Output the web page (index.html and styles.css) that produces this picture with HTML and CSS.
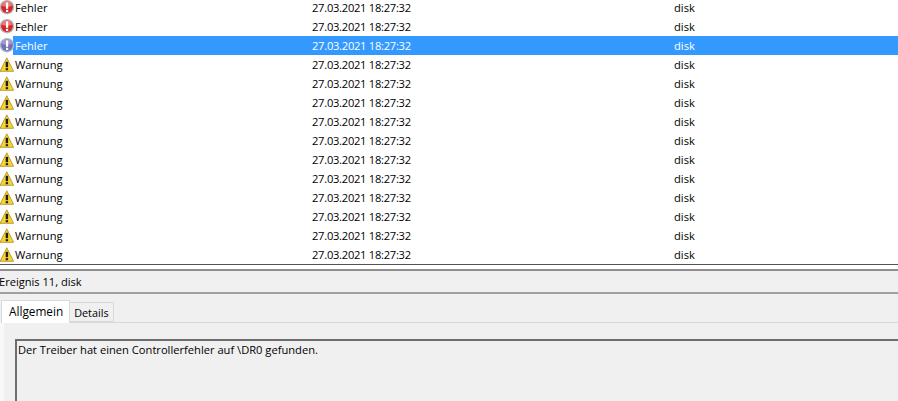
FILE: index.html
```html
<!DOCTYPE html>
<html lang="de">
<head>
  <meta charset="UTF-8" />
  <title>Ereignisanzeige</title>
  <link rel="stylesheet" href="styles.css">
</head>
<body>
  <svg class="sprites" width="0" height="0">
    <symbol id="err" viewBox="0 0 15 16">
      <circle cx="7" cy="7.2" r="7.2" fill="#b9b4b4"/>
      <circle cx="7" cy="7.2" r="5.8" fill="#d8252b"/>
      <path d="M2 5.7a5 4.5 0 0 1 10 0a7 3 0 0 1-10 0z" fill="#ec7a7c"/>
      <rect x="6" y="2.4" width="2.2" height="6.4" fill="#fff"/>
      <rect x="6" y="9.8" width="2.2" height="2.2" fill="#fff"/>
    </symbol>
    <symbol id="errsel" viewBox="0 0 15 16">
      <circle cx="7" cy="7.2" r="7.2" fill="#a6b6d6"/>
      <circle cx="7" cy="7.2" r="5.8" fill="#7a6eb3"/>
      <path d="M2 5.7a5 4.5 0 0 1 10 0a7 3 0 0 1-10 0z" fill="#a39bd0"/>
      <rect x="6" y="2.4" width="2.2" height="6.4" fill="#fff"/>
      <rect x="6" y="9.8" width="2.2" height="2.2" fill="#fff"/>
    </symbol>
    <symbol id="warn" viewBox="0 0 15 16">
      <path d="M6.8 .8 13.6 14.3H0z" fill="#f8d52e" stroke="#a98a20" stroke-width=".8" stroke-linejoin="round"/>
      <rect x="5.7" y="4.8" width="2.4" height="5.4" fill="#1c1c1c"/>
      <rect x="5.7" y="11.2" width="2.4" height="2" fill="#1c1c1c"/>
    </symbol>
  </svg>

  <!-- event list -->
  <ul class="events">
    <li class="row"><span class="level"><svg class="icon"><use href="#err"/></svg><span class="label">Fehler</span></span><span class="date">27.03.2021 18:27:32</span><span class="source">disk</span></li>
    <li class="row"><span class="level"><svg class="icon"><use href="#err"/></svg><span class="label">Fehler</span></span><span class="date">27.03.2021 18:27:32</span><span class="source">disk</span></li>
    <li class="row selected"><span class="level"><svg class="icon"><use href="#errsel"/></svg><span class="label">Fehler</span></span><span class="date">27.03.2021 18:27:32</span><span class="source">disk</span></li>
    <li class="row"><span class="level"><svg class="icon"><use href="#warn"/></svg><span class="label">Warnung</span></span><span class="date">27.03.2021 18:27:32</span><span class="source">disk</span></li>
    <li class="row"><span class="level"><svg class="icon"><use href="#warn"/></svg><span class="label">Warnung</span></span><span class="date">27.03.2021 18:27:32</span><span class="source">disk</span></li>
    <li class="row"><span class="level"><svg class="icon"><use href="#warn"/></svg><span class="label">Warnung</span></span><span class="date">27.03.2021 18:27:32</span><span class="source">disk</span></li>
    <li class="row"><span class="level"><svg class="icon"><use href="#warn"/></svg><span class="label">Warnung</span></span><span class="date">27.03.2021 18:27:32</span><span class="source">disk</span></li>
    <li class="row"><span class="level"><svg class="icon"><use href="#warn"/></svg><span class="label">Warnung</span></span><span class="date">27.03.2021 18:27:32</span><span class="source">disk</span></li>
    <li class="row"><span class="level"><svg class="icon"><use href="#warn"/></svg><span class="label">Warnung</span></span><span class="date">27.03.2021 18:27:32</span><span class="source">disk</span></li>
    <li class="row"><span class="level"><svg class="icon"><use href="#warn"/></svg><span class="label">Warnung</span></span><span class="date">27.03.2021 18:27:32</span><span class="source">disk</span></li>
    <li class="row"><span class="level"><svg class="icon"><use href="#warn"/></svg><span class="label">Warnung</span></span><span class="date">27.03.2021 18:27:32</span><span class="source">disk</span></li>
    <li class="row"><span class="level"><svg class="icon"><use href="#warn"/></svg><span class="label">Warnung</span></span><span class="date">27.03.2021 18:27:32</span><span class="source">disk</span></li>
    <li class="row"><span class="level"><svg class="icon"><use href="#warn"/></svg><span class="label">Warnung</span></span><span class="date">27.03.2021 18:27:32</span><span class="source">disk</span></li>
    <li class="row"><span class="level"><svg class="icon"><use href="#warn"/></svg><span class="label">Warnung</span></span><span class="date">27.03.2021 18:27:32</span><span class="source">disk</span></li>
  </ul>

  <!-- details pane -->
  <section class="pane">
    <h2 class="pane-title">Ereignis 11, disk</h2>
    <div class="tabs">
      <a class="tab active">Allgemein</a>
      <a class="tab">Details</a>
    </div>
    <div class="tab-page">
      <div class="message">Der Treiber hat einen Controllerfehler auf \DR0 gefunden.</div>
    </div>
  </section>
</body>
</html>
```

FILE: styles.css
```css
* {
  margin: 0;
  padding: 0;
  box-sizing: border-box;
}

html,
body {
  height: 401px;
  overflow: hidden;
}

body {
  background: #f0f0f0;
  font-family: "Open Sans", "Noto Sans", sans-serif;
  font-size: 11.15px;
  color: #000;
}

.sprites {
  display: block;
}

/* Event list */
.events {
  list-style: none;
  height: 265px;
  background: #fff;
  border-bottom: 1px solid #555;
  overflow: hidden;
}

.row {
  display: flex;
  align-items: center;
  height: 19px;
  position: relative;
  top: -2px;
}

.level {
  display: flex;
  align-items: center;
  width: 312px;
}

.icon {
  width: 15px;
  height: 16px;
  flex: none;
}

.label,
.date,
.source {
  line-height: 19px;
}

.date {
  width: 362px;
  letter-spacing: -0.26px;
}

.selected {
  background: linear-gradient(#3399ff, #3399ff) no-repeat right / calc(100% - 13px) 100%;
  color: #fff;
}

/* Details pane */
.pane {
  height: 136px;
  padding-top: 4px;
  background: #fff;
}

.pane-title {
  height: 25px;
  border-top: 2px solid #8f8f8f;
  border-bottom: 2px solid #a0a0a0;
  background: #f0f0f0;
  font-size: 11.1px;
  font-weight: 400;
  line-height: 21px;
  text-indent: -1px;
}

.tabs {
  display: flex;
  align-items: flex-end;
  height: 28px;
  padding-left: 1px;
  background: #f0f0f0;
}

.tab {
  height: 20px;
  padding: 0 4px;
  border: 1px solid #d9d9d9;
  border-left: 0;
  background: #f0f0f0;
  font-size: 10.8px;
  line-height: 20px;
}

.tab.active {
  height: 23px;
  padding: 0 6px 0 7px;
  border-left: 1px solid #d9d9d9;
  border-bottom: 0;
  background: #fff;
  font-size: 11.8px;
  line-height: 21px;
  position: relative;
  top: 1px;
}

.tab-page {
  height: 80px;
  border-top: 1px solid #d9d9d9;
  border-left: 4px solid #f8f8f8;
  padding: 16px 0 0 11px;
  background: #f0f0f0;
}

.message {
  height: 70px;
  border-top: 2px solid #6d6d6d;
  border-left: 2px solid #6d6d6d;
  padding-left: 1px;
  line-height: 17px;
}
```
